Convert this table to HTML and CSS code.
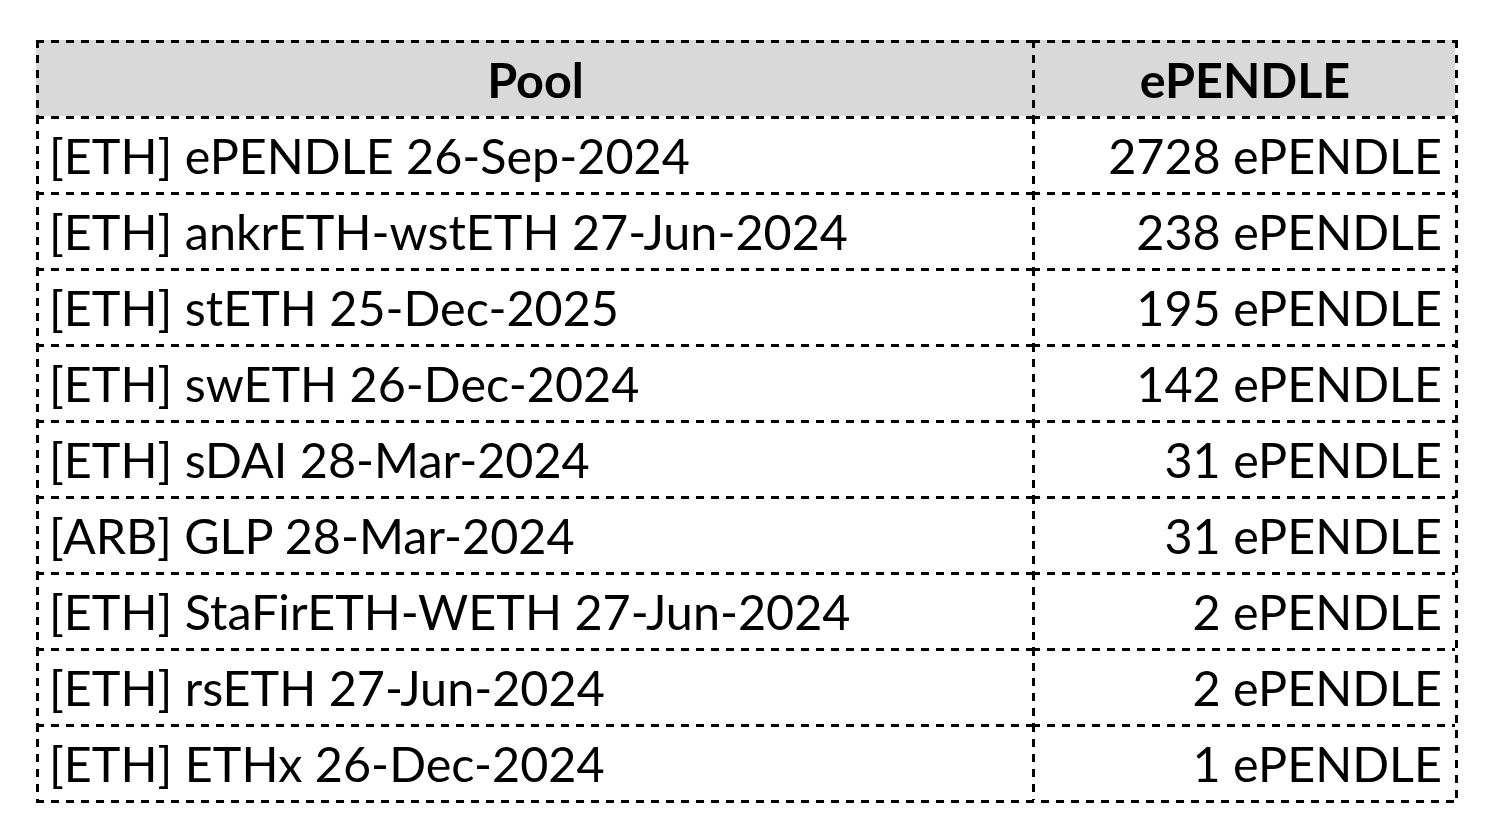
FILE: index.html
```html
<!DOCTYPE html>
<html>
<head>
<meta charset="utf-8">
<link rel="stylesheet" href="styles.css">
</head>
<body>
<div class="sheet">
  <div class="cell head">Pool</div>
  <div class="cell head">ePENDLE</div>
  <div class="cell">[ETH] ePENDLE 26-Sep-2024</div>
  <div class="cell num">2728 ePENDLE</div>
  <div class="cell">[ETH] ankrETH-wstETH 27-Jun-2024</div>
  <div class="cell num">238 ePENDLE</div>
  <div class="cell">[ETH] stETH 25-Dec-2025</div>
  <div class="cell num">195 ePENDLE</div>
  <div class="cell">[ETH] swETH 26-Dec-2024</div>
  <div class="cell num">142 ePENDLE</div>
  <div class="cell">[ETH] sDAI 28-Mar-2024</div>
  <div class="cell num">31 ePENDLE</div>
  <div class="cell">[ARB] GLP 28-Mar-2024</div>
  <div class="cell num">31 ePENDLE</div>
  <div class="cell">[ETH] StaFirETH-WETH 27-Jun-2024</div>
  <div class="cell num">2 ePENDLE</div>
  <div class="cell">[ETH] rsETH 27-Jun-2024</div>
  <div class="cell num">2 ePENDLE</div>
  <div class="cell">[ETH] ETHx 26-Dec-2024</div>
  <div class="cell num">1 ePENDLE</div>
</div>
</body>
</html>
```

FILE: styles.css
```css
html, body {
  margin: 0;
  padding: 0;
  background: #ffffff;
}

body {
  padding: 40px 0 0 36px;
  font-family: "Lato", "Liberation Sans", sans-serif;
  color: #000000;
}

.sheet {
  display: grid;
  grid-template-columns: 996px 423px;
  grid-auto-rows: 76px;
  width: max-content;
  padding: 0 3px 3px 0;
  background:
    repeating-linear-gradient(to bottom, #000 0 8px, transparent 8px 15px) right top / 3px 100% no-repeat,
    repeating-linear-gradient(to right, #000 0 8px, transparent 8px 15px) left bottom / 100% 3px no-repeat;
}

.cell {
  display: flex;
  align-items: center;
  padding: 3px 13px 0 13px;
  font-size: 48.5px;
  line-height: 1;
  white-space: nowrap;
  background:
    repeating-linear-gradient(to right, #000 0 8px, transparent 8px 15px) left top / 100% 3px no-repeat,
    repeating-linear-gradient(to bottom, #000 0 8px, transparent 8px 15px) left top / 3px 100% no-repeat;
}

.head {
  justify-content: center;
  font-weight: 700;
  padding-left: 3px;
  padding-right: 0;
  background:
    repeating-linear-gradient(to right, #000 0 8px, transparent 8px 15px) left top / 100% 3px no-repeat,
    repeating-linear-gradient(to bottom, #000 0 8px, transparent 8px 15px) left top / 3px 100% no-repeat,
    #d9d9d9;
}

.num {
  justify-content: flex-end;
}
```
